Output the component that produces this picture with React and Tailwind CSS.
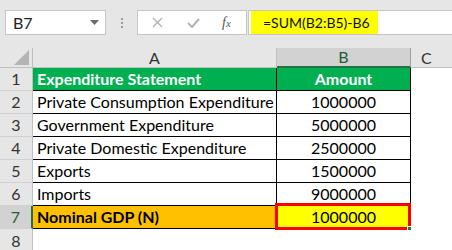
import React from 'react';

const rows = [
  { n: 1, a: 'Expenditure Statement', b: 'Amount', kind: 'head' },
  { n: 2, a: 'Private Consumption Expenditure', b: '1000000' },
  { n: 3, a: 'Government Expenditure', b: '5000000' },
  { n: 4, a: 'Private Domestic Expenditure', b: '2500000' },
  { n: 5, a: 'Exports', b: '1500000' },
  { n: 6, a: 'Imports', b: '9000000' },
  { n: 7, a: 'Nominal GDP (N)', b: '1000000', kind: 'total' },
];

const font = { fontFamily: 'Lato, "Open Sans", "Liberation Sans", sans-serif' };

const App = () => {
  return (
    <div className="w-[452px] h-[250px] overflow-hidden bg-white text-[16px] text-black" style={font}>
      {/* formula bar */}
      <div className="h-[48px] bg-[#e6e6e6] flex items-start pt-[10px] pl-[5px]">
        <div className="w-[101px] h-[25px] bg-white border border-[#c6c6c6] flex items-center justify-between pl-[7px] pr-[6px]">
          <span className="text-[16px] text-[#222]">B7</span>
          <svg width="9" height="5" viewBox="0 0 9 5"><path d="M0 0h9L4.5 5z" fill="#6b6b6b" /></svg>
        </div>
        <div className="w-[31px] h-[25px] flex flex-col items-center justify-center gap-[2px]">
          <span className="w-[2px] h-[2px] bg-[#9a9a9a]" />
          <span className="w-[2px] h-[2px] bg-[#9a9a9a]" />
          <span className="w-[2px] h-[2px] bg-[#9a9a9a]" />
        </div>
        <div className="w-[110px] h-[25px] bg-white border border-[#c6c6c6] flex items-center">
          <svg className="ml-[14px]" width="11" height="11" viewBox="0 0 11 11"><path d="M1 1l9 9M10 1l-9 9" stroke="#b3b3b3" strokeWidth="1.4" /></svg>
          <svg className="ml-[24px]" width="13" height="10" viewBox="0 0 13 10"><path d="M1 5l4 4 7-8" stroke="#b3b3b3" strokeWidth="2" fill="none" /></svg>
          <span className="ml-[22px] text-[14px] italic text-[#555]" style={{ fontFamily: '"Liberation Serif", serif' }}>f<span className="text-[11px]">x</span></span>
        </div>
        <div className="ml-[1px] flex-1 h-[25px] bg-white border-y border-l border-[#c6c6c6] flex items-stretch">
          <div className="ml-[2px] bg-[#ffff00] flex items-center pl-[12px] pr-[8px] text-[14px] text-[#111] whitespace-nowrap">=SUM(B2:B5)-B6</div>
        </div>
      </div>

      {/* sheet */}
      <div className="grid grid-cols-[33px_244px_134px_41px] grid-rows-[20px_repeat(8,23px)]">
        <div className="bg-[#e6e6e6] border-r border-b border-[#c0c0c0] flex items-end justify-end pr-[3px] pb-[2px]">
          <svg width="15" height="15" viewBox="0 0 15 15"><path d="M15 0v15H0z" fill="#b4b4b4" /></svg>
        </div>
        <div className="bg-[#e6e6e6] border-r border-b border-[#c0c0c0] flex items-center justify-center text-[#333]">A</div>
        <div className="bg-[#d2d2d2] border-r border-[#9e9e9e] border-b-2 border-b-[#217346] flex items-center justify-center text-[#1e5e3a]">B</div>
        <div className="bg-[#e6e6e6] border-b border-[#c0c0c0] flex items-center pl-[10px] text-[#333]">C</div>

        {rows.map((r) => {
          const sel = r.kind === 'total';
          const bgA = r.kind === 'head' ? 'bg-[#00b050] text-white font-bold' : sel ? 'bg-[#ffc000] font-bold' : 'bg-white';
          const bgB = r.kind === 'head' ? 'bg-[#00b050] text-white font-bold' : sel ? 'bg-[#ffff00]' : 'bg-white';
          return (
            <React.Fragment key={r.n}>
              <div className={`${sel ? 'bg-[#d2d2d2] text-[#1e5e3a] border-r-2 border-r-[#217346]' : 'bg-[#e6e6e6] text-[#333] border-r border-r-[#c0c0c0]'} border-b border-b-[#d0d0d0] flex items-center justify-center`}>{r.n}</div>
              <div className={`${bgA} border-r border-b border-black flex items-center pl-[4px] whitespace-nowrap overflow-hidden`}>{r.a}</div>
              <div className={`${bgB} relative border-r border-b border-black flex items-center justify-center`}>
                {r.b}
                {sel && (
                  <>
                    <div className="absolute left-[-2px] top-[-3px] w-[136px] h-[27px] border-[3px] border-[#ff0000]" />
                    <div className="absolute left-[130px] top-[20px] w-[5px] h-[5px] bg-[#217346] border border-white" />
                  </>
                )}
              </div>
              <div className="bg-white" />
            </React.Fragment>
          );
        })}
        <div className="bg-[#e6e6e6] text-[#333] border-r border-[#c0c0c0] flex items-center justify-center">8</div>
        <div className="bg-white" />
        <div className="bg-white" />
        <div className="bg-white" />
      </div>
    </div>
  );
};

export default App;
